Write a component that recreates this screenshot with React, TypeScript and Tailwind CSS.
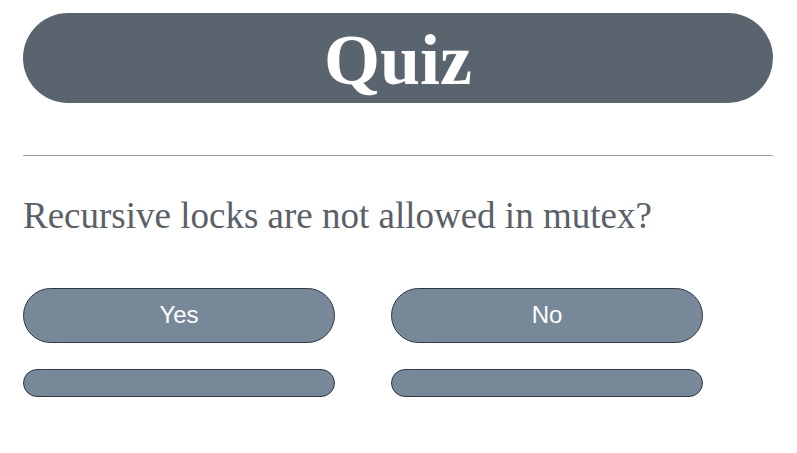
export default function App() {
  const serif = { fontFamily: '"Liberation Serif", "Times New Roman", serif' }
  return (
    <div className="min-h-[453px] w-[797px] bg-white px-[23px] pt-[13px]">
      <div className="flex h-[90px] w-[750px] items-center justify-center rounded-full bg-[#59646f]">
        <h1 className="mt-[4px] text-[72px] font-bold leading-none text-white" style={serif}>
          Quiz
        </h1>
      </div>
      <hr className="mt-[52px] w-[750px] border-t border-[#a0a0a0]" />
      <p className="mt-[40px] text-[37px] leading-[40px] text-[#596068]" style={serif}>
        Recursive locks are not allowed in mutex?
      </p>
      <div className="mt-[52px] grid w-[680px] grid-cols-2 gap-x-[56px] gap-y-[26px]">
        {["Yes", "No"].map((a) => (
          <button
            key={a}
            className="flex h-[55px] items-center justify-center rounded-full border border-[#2f3a45] bg-[#778899] pb-[1px] text-[24px] text-white"
            style={{ fontFamily: '"Liberation Sans", Arial, sans-serif' }}
          >
            {a}
          </button>
        ))}
        <div className="h-[28px] rounded-full border border-[#2f3a45] bg-[#778899]" />
        <div className="h-[28px] rounded-full border border-[#2f3a45] bg-[#778899]" />
      </div>
    </div>
  )
}
